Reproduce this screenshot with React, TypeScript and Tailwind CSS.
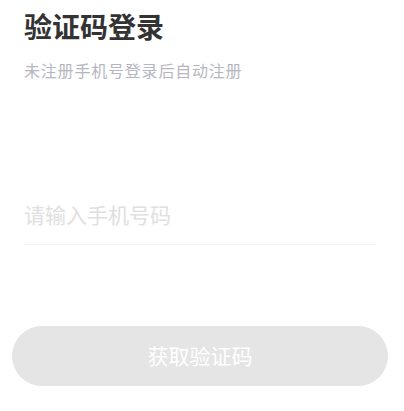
import { useState } from 'react';

const font = { fontFamily: '"Noto Sans CJK SC", "Noto Sans", sans-serif' };

const App = () => {
  const [phone, setPhone] = useState('');

  return (
    <div className="min-h-screen bg-white" style={font}>
      <div className="px-6 pt-[8px]">
        <h1 className="text-[28px] leading-[36px] font-bold text-[#333333]">验证码登录</h1>
        <p className="mt-[16px] text-[16px] leading-[20px] tracking-[0.8px] text-[#b6b6c2]">
          未注册手机号登录后自动注册
        </p>

        <div className="mt-[114px] pb-[10px] border-b border-[#f2f2f2] w-[352px]">
          <input
            type="tel"
            value={phone}
            onChange={(e) => setPhone(e.target.value)}
            placeholder="请输入手机号码"
            className="block w-full h-[40px] text-[21px] text-[#333333] outline-none bg-transparent placeholder:text-[#e0e0e0]"
            style={font}
          />
        </div>
      </div>

      <button
        disabled
        className="mt-[81px] ml-3 w-[376px] h-[60px] rounded-full bg-[#e5e5e5] text-white text-[21px] flex items-center justify-center"
        style={font}
      >
        获取验证码
      </button>
    </div>
  );
};

export default App;
